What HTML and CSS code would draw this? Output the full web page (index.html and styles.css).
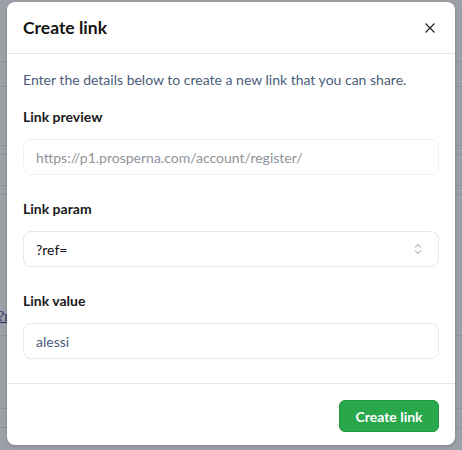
FILE: index.html
```html
<!DOCTYPE html>
<html lang="en">
<head>
<meta charset="utf-8">
<title>Create link</title>
<link rel="stylesheet" href="styles.css">
</head>
<body>
<div class="page">
  <div class="row r1"></div>
  <div class="row r2"></div>
  <div class="row r3"></div>
  <div class="row r4"></div>
  <div class="row r5"></div>
  <div class="row r6"></div>
  <div class="row r7"><a class="peek" href="#">?r</a></div>
  <div class="row r8"></div>
  <div class="row r9"></div>
</div>
<div class="backdrop"></div>
<div class="modal">
  <div class="modal-header">
    <h2 class="modal-title">Create link</h2>
    <button class="close" aria-label="Close">
      <svg width="10" height="10" viewBox="0 0 10 10"><path d="M0.5 0.5L9.5 9.5M9.5 0.5L0.5 9.5" stroke="#1f2328" stroke-width="1.2" fill="none"/></svg>
    </button>
  </div>
  <div class="modal-body">
    <p class="desc">Enter the details below to create a new link that you can share.</p>
    <div class="field">
      <label class="label">Link preview</label>
      <div class="input placeholder">https://p1.prosperna.com/account/register/</div>
    </div>
    <div class="field">
      <label class="label">Link param</label>
      <div class="input select">
        <span>?ref=</span>
        <svg width="8" height="12" viewBox="0 0 8 12"><path d="M1 4.5L4 1.5L7 4.5M1 7.5L4 10.5L7 7.5" stroke="#8a8f98" stroke-width="1" fill="none"/></svg>
      </div>
    </div>
    <div class="field">
      <label class="label">Link value</label>
      <div class="input value">alessi</div>
    </div>
  </div>
  <div class="modal-footer">
    <button class="btn-primary">Create link</button>
  </div>
</div>
</body>
</html>
```

FILE: styles.css
```css
* { box-sizing: border-box; }
html, body { margin: 0; padding: 0; }
body {
  width: 462px;
  height: 450px;
  overflow: hidden;
  background: #9c9fa6;
  font-family: Lato, "Noto Sans", sans-serif;
  position: relative;
}
.page { position: absolute; inset: 0; }
.row { position: absolute; left: 0; right: 0; height: 1px; background: #8c9098; }
.r1 { top: 61px; }
.r2 { top: 86px; }
.r3 { top: 145px; }
.r4 { top: 154px; }
.r5 { top: 185px; }
.r6 { top: 194px; }
.r7 { top: 335px; }
.r8 { top: 408px; }
.r9 { top: 427px; }
.peek { position: absolute; left: -2px; top: -26px; font: 14px "Liberation Serif", serif; color: #2a2a6a; }
.backdrop { position: absolute; inset: 0; }
.modal {
  position: absolute;
  left: 7px;
  top: 2px;
  width: 448px;
  height: 443px;
  background: #fff;
  border-radius: 8px;
  display: flex;
  flex-direction: column;
  box-shadow: 0 1px 3px rgba(0,0,0,0.2);
}
.modal-header {
  height: 52px;
  border-bottom: 1px solid #e1e6ee;
  display: flex;
  align-items: center;
  justify-content: space-between;
  padding: 0 20px 0 16px;
}
.modal-title {
  margin: 0;
  font-size: 17.5px;
  font-weight: 700;
  color: #151515;
}
.close {
  border: 0;
  background: none;
  padding: 0;
  width: 10px;
  height: 10px;
  display: flex;
}
.modal-body {
  padding: 16px 16px 24px;
  display: flex;
  flex-direction: column;
  gap: 24px;
}
.desc {
  margin: 0 0 -7px;
  font-size: 14px;
  line-height: 20px;
  color: #4a5c7a;
}
.field { display: flex; flex-direction: column; gap: 12px; }
.label {
  font-size: 14px;
  font-weight: 700;
  line-height: 20px;
  color: #1a1a1a;
}
.input {
  height: 36px;
  border: 1px solid #e4e8f0;
  border-radius: 8px;
  padding: 0 12px;
  display: flex;
  align-items: center;
  font-size: 14px;
  color: #111;
}
.placeholder { color: #8f949c; border-color: #eef0f4; }
.select { justify-content: space-between; padding-right: 16px; }
.value { color: #4a5c7a; }
.modal-footer {
  border-top: 1px solid #e1e6ee;
  display: flex;
  justify-content: flex-end;
  padding: 16px 16px 0;
}
.btn-primary {
  width: 100px;
  height: 32px;
  background: #28a84b;
  border: 1px solid #20973f;
  border-radius: 6px;
  color: #fff;
  font-family: inherit;
  font-size: 14px;
  font-weight: 700;
}
```
